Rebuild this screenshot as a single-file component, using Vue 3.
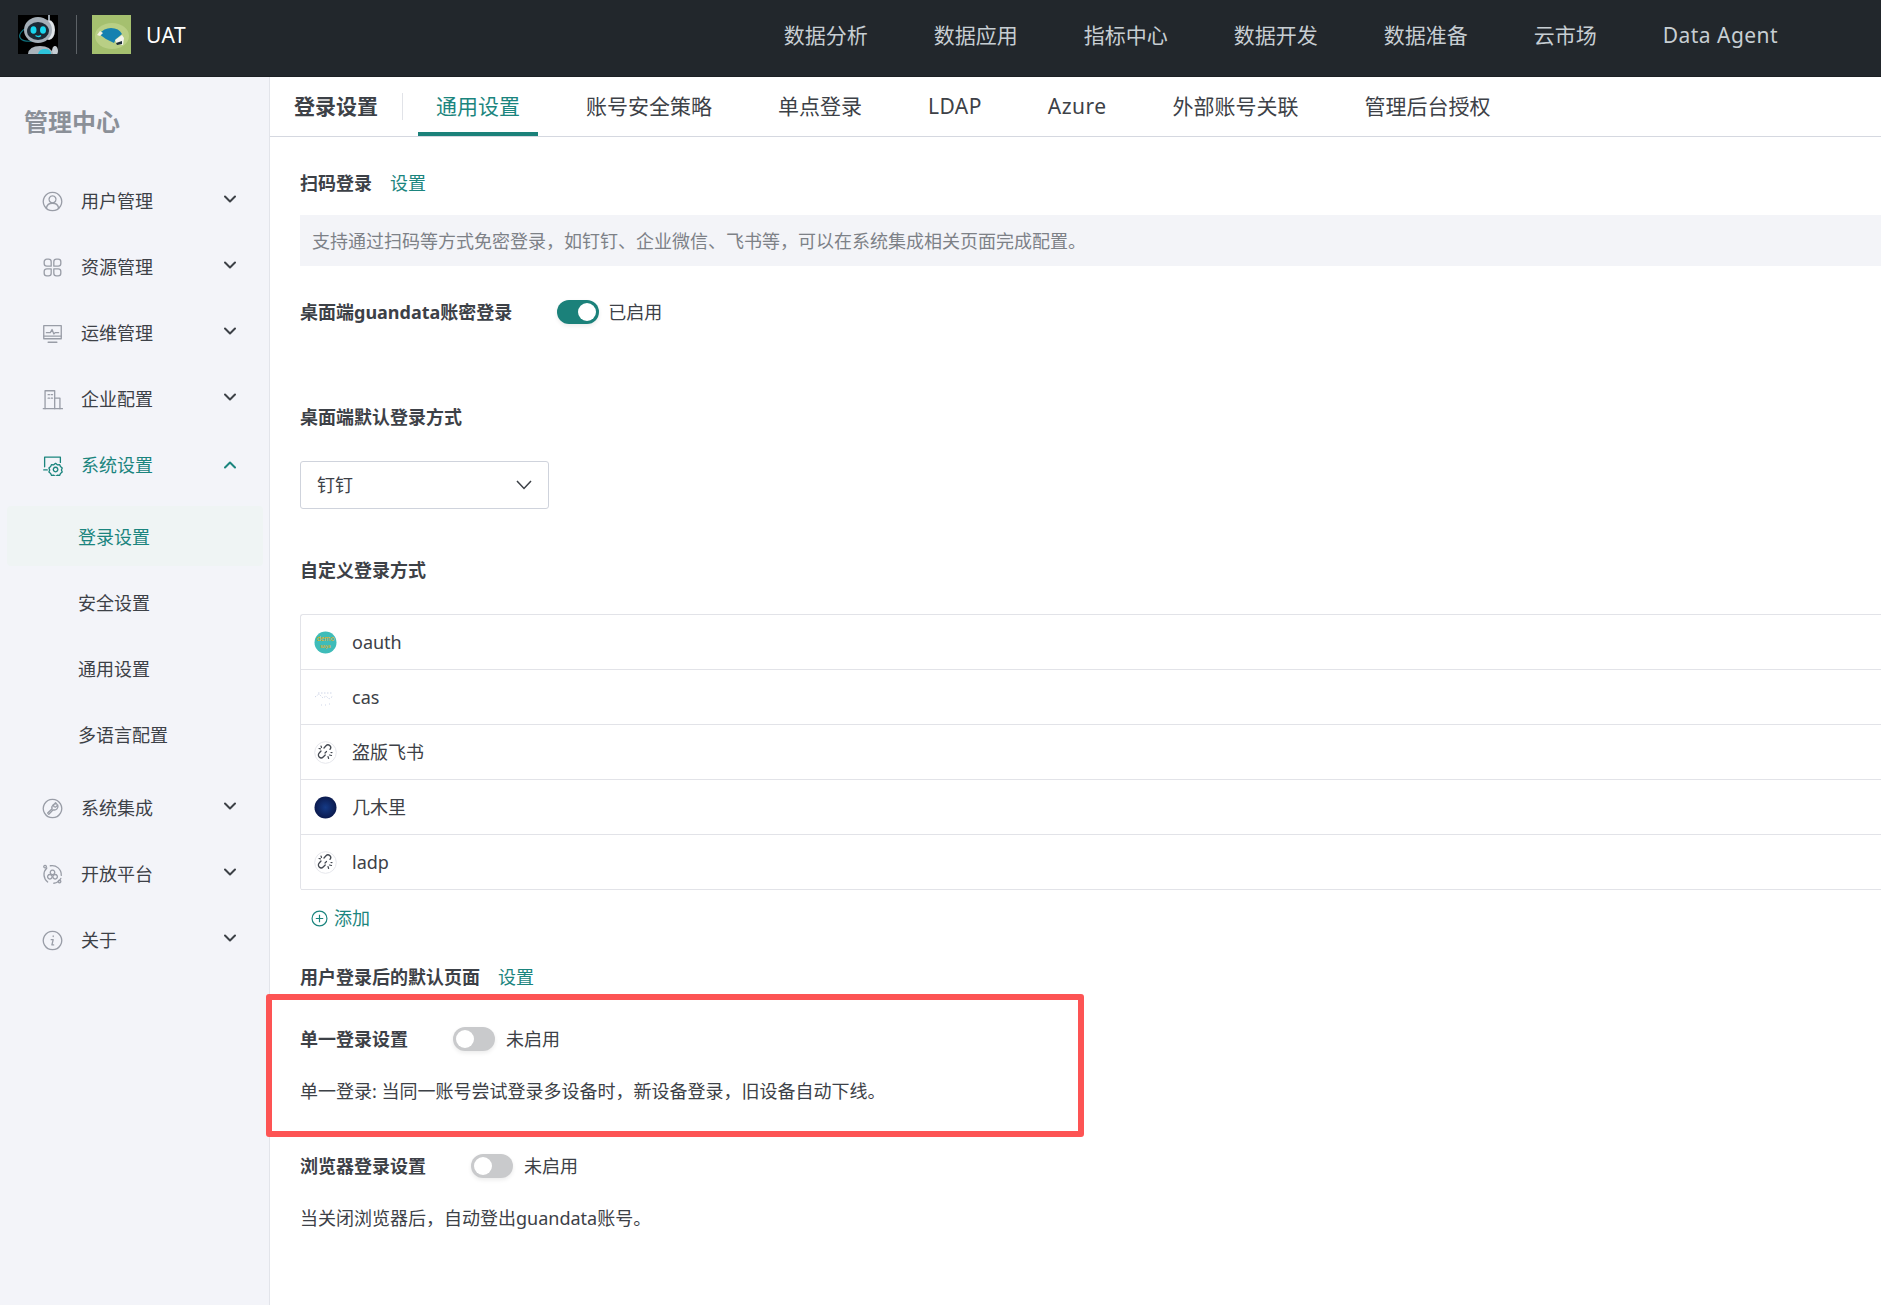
<template>
  <div class="page">
    <header class="topbar">
      <svg class="logo" viewBox="0 0 40 39">
        <rect width="40" height="39" fill="#000" />
        <ellipse cx="18" cy="17" rx="17" ry="8" fill="none" stroke="#0e6f7c" stroke-width="1.2" transform="rotate(-18 18 17)" />
        <rect x="30" y="0" width="2" height="5" fill="#9aa4ad" />
        <ellipse cx="31" cy="15" rx="6" ry="10" fill="#dfe4e8" />
        <ellipse cx="20" cy="15" rx="14" ry="13" fill="#a4aeb7" />
        <ellipse cx="20" cy="16" rx="11" ry="9" fill="#1c2a36" />
        <ellipse cx="15.500" cy="15" rx="3" ry="3.800" fill="#19d6ee" />
        <ellipse cx="25" cy="15" rx="3" ry="3.800" fill="#19d6ee" />
        <path d="M17.500 20.500q3 2 5.500 0" fill="none" stroke="#19d6ee" stroke-width="1.400" />
        <path d="M10 39q1-8 12-8t13 8z" fill="#aab3bb" />
        <path d="M20 39q1-5 7-5t6 5z" fill="#2ec4dc" />
        <ellipse cx="37" cy="36" rx="3" ry="5" fill="#c7ced4" />
      </svg>
      <span class="logo-divider"></span>
      <svg class="logo" viewBox="0 0 39 39">
        <rect width="39" height="39" fill="#a5c06f" />
        <ellipse cx="20" cy="21" rx="17" ry="13" fill="#b9cf85" />
        <path d="M7 19q5-6 12-6 8 0 11 6l-6 5-2 4q-8-3-15-9z" fill="#1581b0" />
        <path d="M5 20l3-4 3 2-3 3z" fill="#f4f1e2" />
        <path d="M23 25l7-5 2 3-1 7-6-1z" fill="#f4f4ee" />
        <path d="M24 28l6-2v3l-5 1z" fill="#1c2c38" />
      </svg>
      <span class="app-name latin">UAT</span>
      <nav class="topnav">
        <a v-for="item in topNav" :key="item" class="topnav-item" :class="{ latin: isLatin(item) }">{{ item }}</a>
      </nav>
    </header>

    <div class="body">
      <aside class="sidebar">
        <h2 class="side-title">管理中心</h2>
        <template v-for="item in menu" :key="item.label">
          <div class="menu-item" :class="{ active: item.open }">
            <svg class="menu-icon" viewBox="0 0 24 24" fill="none" stroke="currentColor" stroke-width="1.5" stroke-linecap="round" stroke-linejoin="round">
              <path v-for="d in item.paths" :key="d" :d="d" />
            </svg>
            <span>{{ item.label }}</span>
            <svg class="menu-arrow" viewBox="0 0 12 8" fill="none" stroke="currentColor" stroke-width="2" stroke-linecap="round" stroke-linejoin="round">
              <path :d="item.open ? 'M1 6.500L6 1.500l5 5' : 'M1 1.500l5 5 5-5'" />
            </svg>
          </div>
          <div v-if="item.children" class="submenu">
            <div v-for="(child, i) in item.children" :key="child" class="sub-item" :class="{ active: i === 0 }">{{ child }}</div>
          </div>
        </template>
      </aside>

      <main class="main">
        <div class="tabs">
          <span class="tabs-title">登录设置</span>
          <span class="tabs-divider"></span>
          <a v-for="(tab, i) in tabs" :key="tab" class="tab" :class="{ active: i === 0, latin: isLatin(tab) }">{{ tab }}</a>
        </div>

        <div class="content">
          <div class="label-row first">
            <span class="label">扫码登录</span>
            <a class="link">设置</a>
          </div>
          <div class="info">支持通过扫码等方式免密登录，如钉钉、企业微信、飞书等，可以在系统集成相关页面完成配置。</div>

          <div class="switch-row desk">
            <span class="label">桌面端guandata账密登录</span>
            <span class="switch on"><i></i></span>
            <span class="switch-text">已启用</span>
          </div>

          <div class="label-row default-way"><span class="label">桌面端默认登录方式</span></div>
          <div class="select">
            <span>钉钉</span>
            <svg width="16" height="10" viewBox="0 0 16 10" fill="none" stroke="#3c4046" stroke-width="1.5">
              <path d="M1 1l7 7.500L15 1" />
            </svg>
          </div>

          <div class="label-row custom-way"><span class="label">自定义登录方式</span></div>
          <div class="login-list">
            <div v-for="row in logins" :key="row.name" class="login-row">
              <svg v-if="row.icon === 'demo'" class="login-icon" viewBox="0 0 23 23">
                <circle cx="11.500" cy="11.500" r="11" fill="#3ebcb9" />
                <text x="11.500" y="10" text-anchor="middle" class="demo-text">demo</text>
                <text x="11.500" y="17" text-anchor="middle" class="demo-text small">saya</text>
              </svg>
              <svg v-else-if="row.icon === 'cas'" class="login-icon" viewBox="0 0 23 23" fill="none" stroke="#cfd6e8" stroke-width="1" stroke-dasharray="1.500 1.500">
                <path d="M1 11l4-3 4 4 3-2 3 3 4-3" />
                <path d="M4 7h15" />
                <path d="M7 19h1M11 19h1M15 18h1" />
              </svg>
              <svg v-else-if="row.icon === 'dark'" class="login-icon" viewBox="0 0 23 23">
                <defs>
                  <radialGradient id="darkBall">
                    <stop offset="0" stop-color="#153a86" />
                    <stop offset="1" stop-color="#0b1a4e" />
                  </radialGradient>
                </defs>
                <circle cx="11.500" cy="11.500" r="11" fill="url(#darkBall)" />
              </svg>
              <svg v-else class="login-icon" viewBox="0 0 23 23" fill="none">
                <circle cx="11.500" cy="11.500" r="10.800" stroke="#e6e7ec" />
                <path d="M10 7l2-2.200a2.600 2.600 0 0 1 4 3.600M7 10l-1.800 2a2.800 2.800 0 0 0 4 4l2-2" stroke="#454a52" stroke-width="1.300" stroke-linecap="round" />
                <path d="M7 5l.5 1.500M5 7.500l1.500.3M15.500 14l2 .5M14 15.500l.6 2M17 11.500l1 .2M11 12l1.500-1.500" stroke="#454a52" stroke-width="1.200" stroke-linecap="round" />
              </svg>
              <span>{{ row.name }}</span>
            </div>
          </div>
          <a class="add">
            <svg width="17" height="17" viewBox="0 0 16 16" fill="none" stroke="currentColor" stroke-width="1.100">
              <circle cx="8" cy="8" r="7" />
              <path d="M8 4.500v7M4.500 8h7" />
            </svg>
            添加
          </a>

          <div class="label-row after-login">
            <span class="label">用户登录后的默认页面</span>
            <a class="link">设置</a>
          </div>

          <div class="switch-row single">
            <span class="label">单一登录设置</span>
            <span class="switch"><i></i></span>
            <span class="switch-text">未启用</span>
          </div>
          <p class="desc">单一登录: 当同一账号尝试登录多设备时，新设备登录，旧设备自动下线。</p>

          <div class="switch-row browser">
            <span class="label">浏览器登录设置</span>
            <span class="switch"><i></i></span>
            <span class="switch-text">未启用</span>
          </div>
          <p class="desc">当关闭浏览器后，自动登出guandata账号。</p>

          <div class="highlight"></div>
        </div>
      </main>
    </div>
  </div>
</template>

<script setup>
const topNav = ['数据分析', '数据应用', '指标中心', '数据开发', '数据准备', '云市场', 'Data Agent']
const tabs = ['通用设置', '账号安全策略', '单点登录', 'LDAP', 'Azure', '外部账号关联', '管理后台授权']

const isLatin = (text) => /^[A-Za-z ]+$/.test(text)

const menu = [
  {
    label: '用户管理',
    paths: ['M12 1.500a10.500 10.500 0 1 0 .01 0z', 'M12 5.500a4 4 0 1 0 .01 0z', 'M5 19.500c.6-3.600 3.300-5.500 7-5.500s6.400 1.900 7 5.500'],
  },
  {
    label: '资源管理',
    paths: [
      'M5.500 2.500h2a3 3 0 0 1 3 3v5h-5a3 3 0 0 1-3-3v-2a3 3 0 0 1 3-3z',
      'M16.500 2.500h2a3 3 0 0 1 3 3v2a3 3 0 0 1-3 3h-5v-5a3 3 0 0 1 3-3z',
      'M5.500 13.500h5v5a3 3 0 0 1-3 3h-2a3 3 0 0 1-3-3v-2a3 3 0 0 1 3-3z',
      'M13.500 13.500h5a3 3 0 0 1 3 3v2a3 3 0 0 1-3 3h-2a3 3 0 0 1-3-3z',
    ],
  },
  {
    label: '运维管理',
    paths: ['M2 3h20v15H2z', 'M5 11h4.500l2-3.500 2 5 1.500-1.500h4', 'M7 22h10', 'M2 15h20'],
  },
  {
    label: '企业配置',
    paths: ['M1.500 22.500h22', 'M3.500 22.500V2h11v20.500', 'M14.500 10.500h6v12', 'M7 6.500h1.500M10.500 6.500H12M7 10.500h1.500M10.500 10.500H12'],
  },
  {
    label: '系统设置',
    open: true,
    paths: [
      'M3 13.500V2.500h18v6',
      'M2 17h4',
      'M15.500 9.500l2 1.700 2.600-.3 1 2.300 2 1.600-.9 2.400.9 2.300-2 1.600-1 2.300-2.600-.3-2 1.700-2-1.700-2.600.3-1-2.300-2-1.600.9-2.300-.9-2.400 2-1.600 1-2.300 2.600.3z',
      'M15.500 14a2.600 2.600 0 1 0 .01 0z',
    ],
    children: ['登录设置', '安全设置', '通用设置', '多语言配置'],
  },
  {
    label: '系统集成',
    paths: ['M12 1.500a10.500 10.500 0 1 0 .01 0z', 'M17 7a4.200 4.200 0 0 0-5.500 5.200L6.500 17.200l1.300 1.300 5-5A4.200 4.200 0 0 0 18 8l-2.400 2.400-2-.5-.5-2L15.500 5.500z'],
  },
  {
    label: '开放平台',
    paths: [
      'M5.500 4.500a10.500 10.500 0 0 0 1 16',
      'M9.500 2a10.500 10.500 0 0 1 12.500 11',
      'M21.500 16.500a10.500 10.500 0 0 1-8 5.500',
      'M3.500 1.500a1.500 1.500 0 1 0 .01 0z',
      'M20 18.500a1.500 1.500 0 1 0 .01 0z',
      'M12 7a2.600 2.600 0 1 0 .01 0z',
      'M9 12a2.600 2.600 0 1 0 .01 0z',
      'M15 12a2.600 2.600 0 1 0 .01 0z',
    ],
  },
  {
    label: '关于',
    paths: ['M12 1.500a10.500 10.500 0 1 0 .01 0z', 'M12.800 6.800v.6', 'M10.500 11h2.300l-1.500 6h2'],
  },
]

const logins = [
  { name: 'oauth', icon: 'demo' },
  { name: 'cas', icon: 'cas' },
  { name: '盗版飞书', icon: 'broken' },
  { name: '几木里', icon: 'dark' },
  { name: 'ladp', icon: 'broken' },
]
</script>

<style>
body {
  margin: 0;
  font-family: "Noto Sans", "Noto Sans CJK SC", sans-serif;
}
</style>

<style scoped>
.page {
  height: 100vh;
  display: flex;
  flex-direction: column;
  overflow: hidden;
  color: #3d4147;
  font-size: 18px;
  line-height: 26px;
}

.topbar {
  height: 77px;
  flex-shrink: 0;
  box-sizing: border-box;
  display: flex;
  align-items: center;
  padding: 0 103px 7px 18px;
  background: #22272c;
  border-bottom: 1px solid #1b1f23;
}

.logo {
  width: 40px;
  height: 39px;
  flex-shrink: 0;
}

.logo + .logo-divider + .logo {
  width: 39px;
}

.logo-divider {
  width: 1px;
  height: 39px;
  margin: 0 15px 0 18px;
  background: #5d6267;
}

.app-name {
  margin-left: 15px;
  font-size: 21px;
  line-height: 30px;
  color: #fff;
}

.topnav {
  margin-left: auto;
  display: flex;
  gap: 66px;
}

.topnav-item {
  font-size: 21px;
  line-height: 30px;
  color: #c7ced3;
}

.latin {
  letter-spacing: 0.45px;
}

.body {
  flex: 1;
  display: flex;
  min-height: 0;
}

.sidebar {
  width: 270px;
  flex-shrink: 0;
  box-sizing: border-box;
  background: #f3f4f9;
  border-right: 1px solid #e2e4ea;
}

.side-title {
  margin: 27px 0 28px 24px;
  font-size: 24px;
  line-height: 36px;
  font-weight: 700;
  color: #8b9098;
}

.menu-item {
  height: 66px;
  display: flex;
  align-items: center;
  padding: 0 33px 0 42px;
  color: #3d4147;
}

.menu-item.active {
  color: #1b857e;
}

.menu-icon {
  width: 21px;
  height: 21px;
  margin-right: 18px;
  color: #999da7;
}

.menu-item.active .menu-icon {
  color: #1b857e;
}

.menu-arrow {
  width: 12px;
  height: 8px;
  margin: -4px 0 0 auto;
}

.menu-item.active .menu-arrow {
  margin-top: 0;
}

.submenu {
  display: flex;
  flex-direction: column;
  gap: 6px;
  margin: 8px 0 11px;
}

.sub-item {
  height: 60px;
  box-sizing: border-box;
  margin: 0 6px 0 7px;
  padding: 2px 0 0 71px;
  display: flex;
  align-items: center;
  border-radius: 4px;
}

.sub-item.active {
  background: #eff4f4;
  color: #1b857e;
}

.main {
  flex: 1;
  min-width: 0;
}

.tabs {
  height: 60px;
  box-sizing: border-box;
  display: flex;
  align-items: center;
  gap: 30px;
  padding-left: 24px;
  border-bottom: 1px solid #d5d8e0;
  font-size: 21px;
  line-height: 30px;
}

.tabs-title {
  font-weight: 700;
  margin-bottom: 2px;
}

.tabs-divider {
  width: 1px;
  height: 27px;
  margin: 0 -15px 0 -6px;
  background: #e1e3e8;
}

.tab {
  height: 59px;
  box-sizing: border-box;
  padding: 3px 18px 0;
  display: flex;
  align-items: center;
  border-bottom: 4px solid transparent;
}

.tab.active {
  color: #1b857e;
  border-bottom-color: #1b817a;
}

.content {
  position: relative;
  padding: 33px 0 0 30px;
}

.label-row,
.switch-row {
  display: flex;
  align-items: center;
  height: 26px;
}

.label {
  font-weight: 700;
}

.link {
  margin-left: 18px;
  color: #1b857e;
}

.info {
  height: 51px;
  margin-top: 19px;
  padding-left: 12px;
  display: flex;
  align-items: center;
  background: #f3f4f8;
  color: #7d8187;
}

.switch {
  position: relative;
  width: 42px;
  height: 24px;
  border-radius: 12px;
  background: #c9cacc;
  box-shadow: 0 2px 4px rgba(0, 0, 0, 0.08);
}

.switch i {
  position: absolute;
  top: 3px;
  left: 3px;
  width: 18px;
  height: 18px;
  border-radius: 50%;
  background: #fff;
}

.switch.on {
  background: #1b817a;
}

.switch.on i {
  left: 21px;
}

.switch-text {
  margin-left: 11px;
}

.switch.on + .switch-text {
  margin-left: 9px;
}

.desk {
  margin-top: 33px;
}

.desk .switch {
  margin-left: 45px;
}

.default-way {
  margin-top: 79px;
}

.select {
  width: 249px;
  height: 48px;
  box-sizing: border-box;
  margin-top: 31px;
  padding: 0 16px;
  display: flex;
  align-items: center;
  justify-content: space-between;
  border: 1px solid #cfd3dc;
  border-radius: 3px;
}

.custom-way {
  margin-top: 48px;
}

.login-list {
  margin-top: 31px;
  border: 1px solid #e2e3e8;
  border-right: none;
  border-bottom: none;
  border-radius: 3px 0 0 3px;
}

.login-row {
  height: 54px;
  display: flex;
  align-items: center;
  gap: 15px;
  padding-left: 13px;
  border-bottom: 1px solid #e2e3e8;
}

.login-icon {
  width: 23px;
  height: 23px;
  flex-shrink: 0;
}

.demo-text {
  font-size: 6.500px;
  fill: #f0ad14;
}

.demo-text.small {
  font-size: 5px;
}

.add {
  margin: 15px 0 0 11px;
  height: 26px;
  width: fit-content;
  display: flex;
  align-items: center;
  gap: 6px;
  color: #1b857e;
}

.after-login {
  margin-top: 33px;
}

.single {
  margin-top: 36px;
}

.single .switch {
  margin-left: 45px;
}

.browser {
  margin-top: 49px;
}

.browser .switch {
  margin-left: 45px;
}

.desc {
  margin: 26px 0 0;
  line-height: 26px;
}

.highlight {
  position: absolute;
  left: -4px;
  top: 857px;
  width: 818px;
  height: 143px;
  box-sizing: border-box;
  border: 6px solid #fd5454;
  border-radius: 3px;
  pointer-events: none;
}
</style>
